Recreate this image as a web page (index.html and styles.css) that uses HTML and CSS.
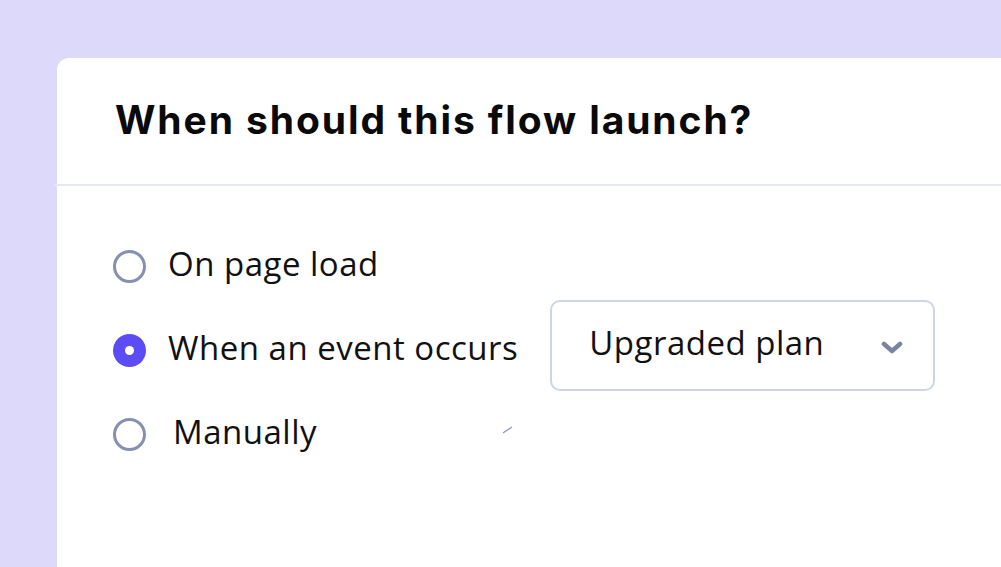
FILE: index.html
```html
<!DOCTYPE html>
<html>
<head>
<meta charset="utf-8">
<link rel="stylesheet" href="styles.css">
</head>
<body>
<div class="card">
  <div class="card-header">
    <h1 class="title">When should this flow launch?</h1>
  </div>
  <div class="card-body">
    <div class="option">
      <span class="radio"></span>
      <span class="label">On page load</span>
    </div>
    <div class="option">
      <span class="radio checked"></span>
      <span class="label">When an event occurs</span>
      <div class="select">
        <span class="select-text">Upgraded plan</span>
        <svg class="chevron" width="22" height="14" viewBox="0 0 22 14"><path d="M3 3 L11 10 L19 3" fill="none" stroke="#7b83a3" stroke-width="4.5" stroke-linecap="round" stroke-linejoin="round"/></svg>
      </div>
    </div>
    <div class="option">
      <span class="radio"></span>
      <span class="label manual">Manually</span>
      <svg class="tick" width="12" height="8" viewBox="0 0 12 8"><path d="M1 7 L10 1" stroke="#8b8fd8" stroke-width="1.2"/></svg>
    </div>
  </div>
</div>
</body>
</html>
```
FILE: styles.css
```css
html, body {
  margin: 0;
  padding: 0;
  height: 100%;
  overflow: hidden;
}
body {
  background: #dcd9fb;
  font-family: "Open Sans", "Noto Sans", sans-serif;
  color: #111;
}
.card {
  margin: 58px 0 0 57px;
  background: #fff;
  border-radius: 12px 0 0 0;
  height: 520px;
}
.card-header {
  height: 126px;
  display: flex;
  align-items: center;
  border-bottom: 2px solid #e6e9f2;
  margin-left: -3px;
  padding-left: 61px;
}
.title {
  margin: 0 0 4px 0;
  font-family: "Inter", sans-serif;
  font-weight: 700;
  font-size: 39px;
  letter-spacing: 1.9px;
  color: #0a0a0a;
}
.card-body {
  padding: 38px 0 0 56px;
  display: flex;
  flex-direction: column;
}
.option {
  height: 84px;
  display: flex;
  align-items: center;
  position: relative;
}
.radio {
  width: 27px;
  height: 27px;
  border: 3px solid #8690b0;
  border-radius: 50%;
  flex: none;
}
.radio.checked {
  border: none;
  width: 33px;
  height: 33px;
  background: #5b4cf5;
  display: flex;
  align-items: center;
  justify-content: center;
}
.radio.checked::after {
  content: "";
  width: 9px;
  height: 9px;
  border-radius: 50%;
  background: #fff;
}
.label {
  font-size: 33px;
  letter-spacing: 0.5px;
  margin-left: 22px;
  color: #111;
  margin-top: -5px;
}
.label.manual {
  margin-left: 27px;
}
.select {
  margin-left: 32px;
  margin-top: -9px;
  width: 385px;
  height: 91px;
  box-sizing: border-box;
  border: 2px solid #cfd5e6;
  border-radius: 10px;
  display: flex;
  align-items: center;
  padding: 0 30px 0 37px;
  justify-content: space-between;
}
.select-text {
  font-size: 33px;
  letter-spacing: 0.5px;
  color: #111;
  margin-top: -6px;
}
.chevron {
  margin-top: 4px;
}
.tick {
  position: absolute;
  left: 389px;
  top: 34px;
}
```
